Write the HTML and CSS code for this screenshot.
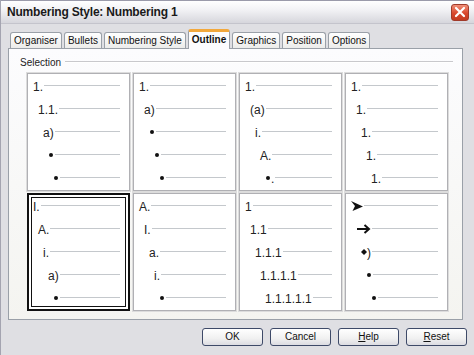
FILE: index.html
```html
<!DOCTYPE html>
<html lang="en">
<head>
  <meta charset="UTF-8">
  <title>Numbering Style: Numbering 1</title>
  <link rel="stylesheet" href="styles.css">
</head>
<body>
  <div class="dialog">
    <!-- TITLE BAR -->
    <div class="titlebar">
      <div class="title">Numbering Style: Numbering 1</div>
      <div class="close">
        <svg width="12" height="12" viewBox="0 0 12 12">
          <path d="M2 2 L10 10 M10 2 L2 10" stroke="#fff" stroke-width="2.2" stroke-linecap="round"/>
        </svg>
      </div>
    </div>

    <!-- TABS -->
    <div class="tabs">
      <div class="tab">Organiser</div>
      <div class="tab">Bullets</div>
      <div class="tab">Numbering Style</div>
      <div class="tab active">Outline</div>
      <div class="tab">Graphics</div>
      <div class="tab">Position</div>
      <div class="tab">Options</div>
    </div>

    <!-- TAB PANEL -->
    <div class="panel">
      <div class="group-head">
        <span class="group-label">Selection</span>
        <span class="group-rule"></span>
      </div>

      <div class="grid">
        <!-- row 1 -->
        <div class="cell">
          <div class="row lv0"><span>1.</span><i></i></div>
          <div class="row lv1"><span>1.1.</span><i></i></div>
          <div class="row lv2"><span>a)</span><i></i></div>
          <div class="row lv3"><span class="dot"></span><i></i></div>
          <div class="row lv4"><span class="dot"></span><i></i></div>
        </div>
        <div class="cell">
          <div class="row lv0"><span>1.</span><i></i></div>
          <div class="row lv1"><span>a)</span><i></i></div>
          <div class="row lv2"><span class="dot"></span><i></i></div>
          <div class="row lv3"><span class="dot"></span><i></i></div>
          <div class="row lv4"><span class="dot"></span><i></i></div>
        </div>
        <div class="cell">
          <div class="row lv0"><span>1.</span><i></i></div>
          <div class="row lv1"><span>(a)</span><i></i></div>
          <div class="row lv2"><span>i.</span><i></i></div>
          <div class="row lv3"><span>A.</span><i></i></div>
          <div class="row lv4"><span class="dot"></span><span>.</span><i></i></div>
        </div>
        <div class="cell">
          <div class="row lv0"><span>1.</span><i></i></div>
          <div class="row lv1"><span>1.</span><i></i></div>
          <div class="row lv2"><span>1.</span><i></i></div>
          <div class="row lv3"><span>1.</span><i></i></div>
          <div class="row lv4"><span>1.</span><i></i></div>
        </div>

        <!-- row 2 -->
        <div class="cell selected">
          <div class="row lv0"><span>I.</span><i></i></div>
          <div class="row lv1"><span>A.</span><i></i></div>
          <div class="row lv2"><span>i.</span><i></i></div>
          <div class="row lv3"><span>a)</span><i></i></div>
          <div class="row lv4"><span class="dot"></span><i></i></div>
        </div>
        <div class="cell">
          <div class="row lv0"><span>A.</span><i></i></div>
          <div class="row lv1"><span>I.</span><i></i></div>
          <div class="row lv2"><span>a.</span><i></i></div>
          <div class="row lv3"><span>i.</span><i></i></div>
          <div class="row lv4"><span class="dot"></span><i></i></div>
        </div>
        <div class="cell">
          <div class="row lv0"><span>1</span><i></i></div>
          <div class="row lv1"><span>1.1</span><i></i></div>
          <div class="row lv2"><span>1.1.1</span><i></i></div>
          <div class="row lv3"><span>1.1.1.1</span><i></i></div>
          <div class="row lv4"><span>1.1.1.1.1</span><i></i></div>
        </div>
        <div class="cell">
          <div class="row lv0">
            <svg class="sym" width="12" height="10" viewBox="0 0 12 10">
              <path d="M0 0 L12 5.5 L1.5 10 L4 5 Z" fill="#111"/>
            </svg><i></i>
          </div>
          <div class="row lv1">
            <svg class="sym" width="15" height="10" viewBox="0 0 15 10">
              <path d="M1 5 H13 M8.5 1 L13 5 L8.5 9" stroke="#111" stroke-width="2" fill="none"/>
            </svg><i></i>
          </div>
          <div class="row lv2">
            <svg class="sym" width="6" height="6" viewBox="0 0 6 6">
              <path d="M3 0 L6 3 L3 6 L0 3 Z" fill="#111"/>
            </svg><span>)</span><i></i>
          </div>
          <div class="row lv3"><span class="dot"></span><i></i></div>
          <div class="row lv4"><span class="dot"></span><i></i></div>
        </div>
      </div>
    </div>

    <!-- BUTTONS -->
    <div class="buttons">
      <div class="btn">OK</div>
      <div class="btn">Cancel</div>
      <div class="btn"><u>H</u>elp</div>
      <div class="btn"><u>R</u>eset</div>
    </div>
  </div>
</body>
</html>
```

FILE: styles.css
```css
/* ===============================
   BASE
=============================== */
html, body {
  margin: 0;
  padding: 0;
  width: 474px;
  height: 355px;
  overflow: hidden;
  background: #dcdce0;
}
body {
  font-family: 'Liberation Sans', Arial, sans-serif;
  color: #111;
}

.dialog {
  width: 474px;
  height: 355px;
  box-sizing: border-box;
  background: #dfdfe3;
  border-left: 1px solid #a4a4b0;
}

/* ===============================
   TITLE BAR
=============================== */
.titlebar {
  height: 24px;
  box-sizing: border-box;
  display: flex;
  align-items: center;
  justify-content: space-between;
  border-top: 1px solid #9a9aaa;
  background: linear-gradient(#ffffff, #f2f2f5 40%, #d6d6dc);
  border-bottom: 1px solid #c4c4cc;
  padding: 0 5px 0 6px;
}
.title {
  font-size: 12px;
  font-weight: bold;
  letter-spacing: -0.2px;
  color: #1a1a1a;
}
.close {
  width: 18px;
  height: 17px;
  box-sizing: border-box;
  border: 1px solid #a03a2a;
  border-radius: 3px;
  background: linear-gradient(#f0907a, #d9472c 55%, #c23a20);
  display: flex;
  align-items: center;
  justify-content: center;
}

/* ===============================
   TABS
=============================== */
.tabs {
  display: flex;
  align-items: flex-end;
  height: 19px;
  margin-top: 5px;
  padding-left: 9px;
  position: relative;
  z-index: 1;
}
.tab {
  height: 16px;
  box-sizing: border-box;
  padding: 0 3px;
  margin-right: 2px;
  font-size: 10px;
  line-height: 15px;
  border: 1px solid #9aa0a8;
  border-bottom: none;
  border-radius: 3px 3px 0 0;
  background: linear-gradient(#ffffff, #ececea);
  white-space: nowrap;
}
.tab.active {
  height: 20px;
  margin-bottom: -1px;
  font-weight: bold;
  line-height: 16px;
  background: #fcfcfe;
  border-top: 3px solid #f2a83c;
}

/* ===============================
   PANEL
=============================== */
.panel {
  margin-left: 7px;
  width: 455px;
  height: 272px;
  box-sizing: border-box;
  border: 1px solid #9aa0a8;
  background: linear-gradient(#fcfcfe, #f4f4f0);
  padding: 7px 0 0 18px;
}
.group-head {
  display: flex;
  align-items: center;
  height: 12px;
  padding-left: 2px;
  margin-left: -9px;
  margin-right: 9px;
}
.group-label {
  font-size: 10px;
  color: #222;
  margin-right: 4px;
}
.group-rule {
  flex: 1;
  height: 1px;
  background: #c8c8cc;
  border-bottom: 1px solid #fff;
}

.grid {
  display: grid;
  grid-template-columns: repeat(4, 103px);
  grid-template-rows: 118px 118px;
  column-gap: 3px;
  row-gap: 2px;
  margin-top: 5px;
}
.cell {
  background: #fff;
  border: 1px solid #b0b0b4;
  box-shadow: 0 0 0 1px #dcdcdc;
  box-sizing: border-box;
  padding: 1px 9px 0 0;
}
.cell.selected {
  border: 2px solid #111;
  box-shadow: inset 0 0 0 2px #fff, inset 0 0 0 3px #111;
  padding: 0 8px 0 0;
}
.cell.selected .row {
  margin-left: -1px;
}

/* riga di anteprima */
.row {
  display: flex;
  align-items: center;
  height: 23px;
  font-size: 12px;
  color: #222;
  white-space: nowrap;
}
.row i {
  flex: 1;
  height: 1px;
  margin-left: 1px;
  margin-bottom: 3px;
  background: #c4c8cc;
}
.lv0 { padding-left: 5px; }
.lv1 { padding-left: 10px; }
.lv2 { padding-left: 15px; }
.lv3 { padding-left: 20px; }
.lv4 { padding-left: 25px; }

.dot {
  width: 4px;
  height: 4px;
  border-radius: 50%;
  background: #111;
  margin: 0 1px 2px 1px;
}
.sym {
  display: block;
  margin-bottom: 2px;
}

/* ===============================
   BUTTONS
=============================== */
.buttons {
  display: flex;
  justify-content: flex-end;
  gap: 7px;
  padding-right: 7px;
  margin-top: 8px;
}
.btn {
  width: 61px;
  height: 18px;
  box-sizing: border-box;
  border: 1px solid #3e4a68;
  border-radius: 3px;
  background: linear-gradient(#ffffff, #f0f0f0 60%, #dcdce2);
  font-size: 10px;
  line-height: 16px;
  text-align: center;
}
.btn u {
  text-decoration: underline;
}
```
